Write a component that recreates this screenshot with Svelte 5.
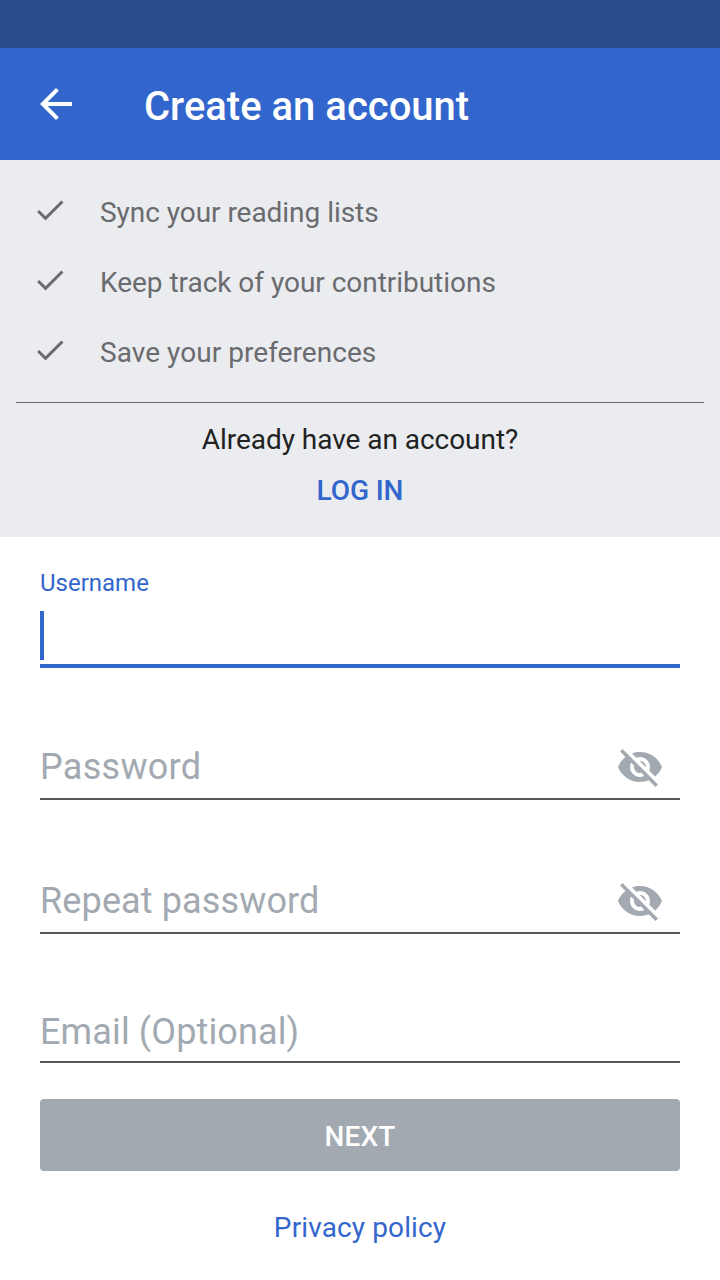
<script>
  const benefits = [
    { text: 'Sync your reading lists', spacing: -0.04 },
    { text: 'Keep track of your contributions', spacing: -0.03 },
    { text: 'Save your preferences', spacing: 0.05 }
  ];
  const passwords = [
    { name: 'Password', spacing: 0.28 },
    { name: 'Repeat password', spacing: 0.13 }
  ];
</script>

<div class="screen">
  <div class="status"></div>
  <header>
    <button class="back" aria-label="Back">
      <svg width="48" height="48" viewBox="0 0 24 24"><path fill="#fff" d="M20 11H7.83l5.59-5.59L12 4l-8 8 8 8 1.41-1.41L7.83 13H20v-2z"/></svg>
    </button>
    <h1>Create an account</h1>
  </header>
  <section class="intro">
    <ul>
      {#each benefits as { text, spacing }}
        <li>
          <svg width="36" height="36" viewBox="0 0 24 24"><path fill="#6a6b6e" d="M9 16.17L4.83 12l-1.42 1.41L9 19 21 7l-1.41-1.41z"/></svg>
          <span style="letter-spacing: {spacing}px">{text}</span>
        </li>
      {/each}
    </ul>
    <hr />
    <p>Already have an account?</p>
    <a class="login" href="#login">LOG IN</a>
  </section>
  <form>
    <label class="caption" for="user">Username</label>
    <div class="user" id="user"><i class="caret"></i></div>
    {#each passwords as { name, spacing }}
      <div class="field">
        <span style="letter-spacing: {spacing}px">{name}</span>
        <svg width="48" height="48" viewBox="0 0 24 24"><path fill="#a2a9b1" d="M12 7c2.76 0 5 2.24 5 5 0 .65-.13 1.26-.36 1.83l2.92 2.92c1.51-1.26 2.7-2.89 3.43-4.75-1.73-4.39-6-7.5-11-7.5-1.4 0-2.74.25-3.98.7l2.16 2.16C10.74 7.13 11.35 7 12 7zM2 4.27l2.28 2.28.46.46C3.08 8.3 1.78 10.02 1 12c1.73 4.39 6 7.5 11 7.5 1.55 0 3.03-.3 4.38-.84l.42.42L19.73 22 21 20.73 3.27 3 2 4.27zM7.53 9.8l1.55 1.55c-.05.21-.08.43-.08.65 0 1.66 1.34 3 3 3 .22 0 .44-.03.65-.08l1.55 1.55c-.67.33-1.41.53-2.2.53-2.76 0-5-2.24-5-5 0-.79.2-1.53.53-2.2zm4.31-.78l3.15 3.15.02-.16c0-1.66-1.34-3-3-3l-.17.01z"/></svg>
      </div>
    {/each}
    <div class="field email"><span>Email (Optional)</span></div>
    <button class="next" type="button">NEXT</button>
    <a class="privacy" href="#privacy">Privacy policy</a>
  </form>
</div>

<style>
  .screen { width: 720px; height: 1280px; background: #fff; font-family: Roboto, sans-serif; overflow: hidden; }
  .status { height: 48px; background: #2a4b8d; }
  header { height: 112px; background: #36c; display: flex; align-items: center; }
  button { border: 0; padding: 0; font-family: inherit; }
  .back { background: none; margin-left: 32px; width: 48px; height: 48px; }
  svg { display: block; flex: none; }
  h1 { margin: 6px 0 0 64px; font-size: 40px; line-height: 48px; font-weight: 500; color: #fff; }
  .intro { height: 377px; background: #eaecf0; box-sizing: border-box; padding: 17px 16px 0; display: flex; flex-direction: column; }
  ul { list-style: none; margin: 0; padding: 0 0 0 16px; }
  li { height: 70px; display: flex; align-items: center; gap: 32px; font-size: 28px; color: #6a6b6e; }
  li svg { margin-bottom: 4px; }
  hr { width: 100%; border: 0; height: 1px; margin: 15px 0 0; background: #6a6b6e; }
  p { margin: 20px 0 0; text-align: center; font-size: 28px; line-height: 33px; letter-spacing: -0.04px; color: #222; }
  .login { align-self: center; margin-top: 18px; font-size: 28px; line-height: 33px; font-weight: 500; letter-spacing: -0.1px; color: #36c; text-decoration: none; }
  form { padding: 0 40px; display: flex; flex-direction: column; }
  .caption { margin-top: 32px; font-size: 24px; line-height: 28px; color: #36c; }
  .user { height: 57px; margin-top: 14px; box-sizing: border-box; border-bottom: 4px solid #36c; }
  .caret { display: block; width: 4px; height: 49px; background: #36c; }
  .field { height: 64px; margin-top: 68px; box-sizing: border-box; border-bottom: 2px solid #54595d; padding-right: 16px; display: flex; justify-content: space-between; align-items: center; font-size: 36px; color: #a2a9b1; }
  .field + .field { margin-top: 70px; }
  .field.email { height: 59px; padding-bottom: 2px; letter-spacing: 0.13px; }
  .next { height: 72px; margin-top: 36px; padding-top: 2px; border-radius: 4px; background: #a2a9b1; color: #fff; font-size: 28px; font-weight: 500; letter-spacing: 0.15px; }
  .privacy { align-self: center; margin-top: 40px; font-size: 28px; line-height: 33px; letter-spacing: 0.12px; color: #36c; text-decoration: none; }
</style>
